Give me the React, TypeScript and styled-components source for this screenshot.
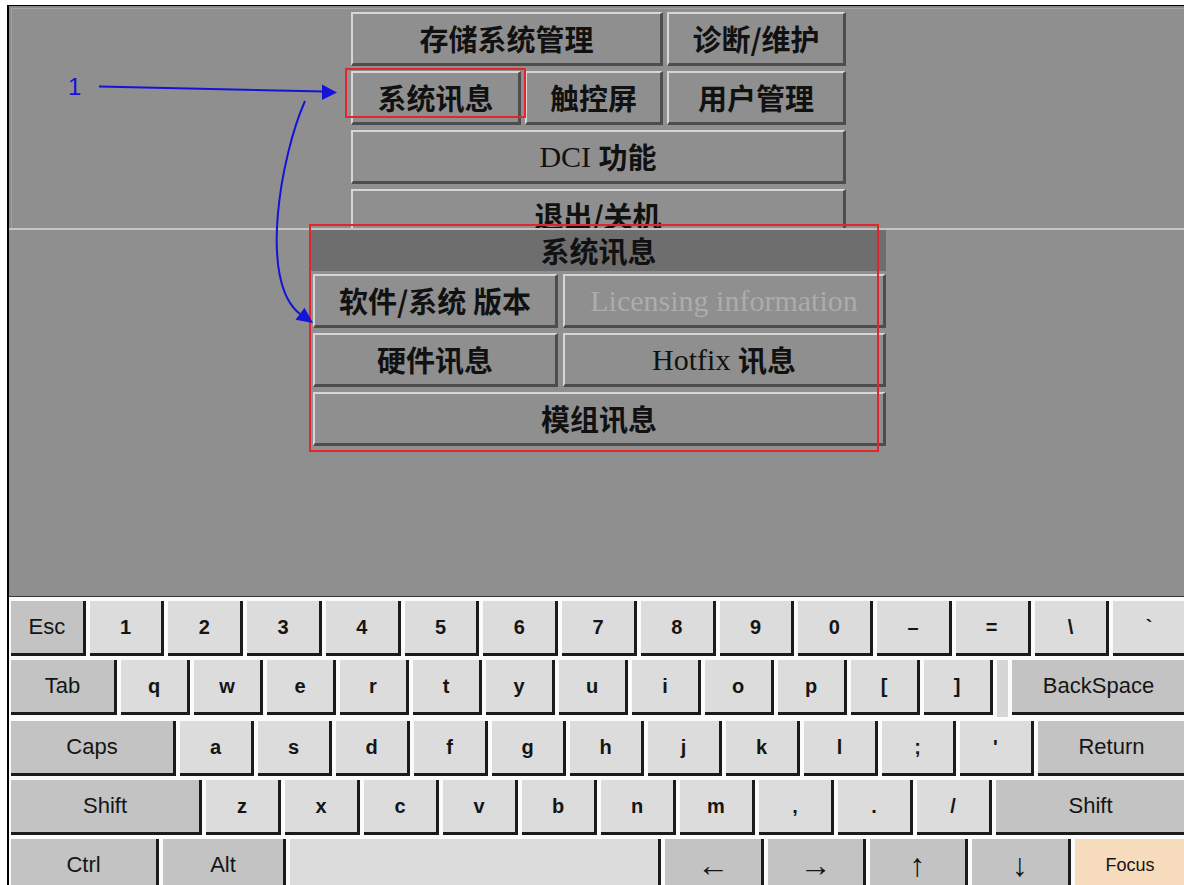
import React from "react";
import styled, { createGlobalStyle } from "styled-components";

const GlobalStyle = createGlobalStyle`
  html, body {
    margin: 0;
    padding: 0;
    background: #ffffff;
    overflow: hidden;
  }
`;

const Page = styled.div`
  position: relative;
  width: 1184px;
  height: 885px;
  overflow: hidden;
  background: #ffffff;
`;

const Frame = styled.div`
  box-sizing: border-box;
  margin: 5px 0 0 7px;
  width: 1181px;
  height: 880px;
  border-top: 1px solid #000000;
  border-left: 2px solid #000000;
  display: flex;
  flex-direction: column;
  overflow: hidden;
`;

const UpperPanel = styled.div`
  flex: 0 0 222px;
  background: #8f8f8f;
  box-shadow: inset 2px 2px 0 #8a8a8a, inset 3px 3px 0 #a3a3a3;
  overflow: hidden;
  padding: 6px 0 0 342px;
  box-sizing: border-box;
`;

const MenuGrid = styled.div`
  display: grid;
  grid-template-columns: 170px 138px 179px;
  grid-auto-rows: 54px;
  column-gap: 4px;
  row-gap: 5px;
`;

const PanelButton = styled.div<{ $span?: number; $disabled?: boolean }>`
  grid-column: span ${(p) => p.$span ?? 1};
  box-sizing: border-box;
  height: 54px;
  background: #8f8f8f;
  border-top: 2px solid #d6d6d6;
  border-left: 2px solid #d6d6d6;
  border-right: 3px solid #4d4d4d;
  border-bottom: 3px solid #4d4d4d;
  display: flex;
  align-items: center;
  justify-content: center;
  font-family: "Noto Sans CJK SC", "Liberation Sans", sans-serif;
  font-weight: 700;
  font-size: 29px;
  line-height: 1;
  white-space: pre;
  color: ${(p) => (p.$disabled ? "#acacac" : "#111111")};
`;

const Latin = styled.span`
  font-family: "Liberation Serif", "Times New Roman", serif;
  font-weight: 400;
  font-size: 30px;
`;

const LowerPanel = styled.div`
  flex: 0 0 369px;
  box-sizing: border-box;
  background: #8f8f8f;
  border-top: 2px solid #c4c4c4;
  border-bottom: 1px solid #383838;
  padding-left: 302px;
`;

const Dialog = styled.div`
  width: 575px;
  display: flex;
  flex-direction: column;
`;

const TitleBar = styled.div`
  height: 41px;
  background: #6e6e6e;
  display: flex;
  align-items: center;
  justify-content: center;
  font-family: "Noto Sans CJK SC", sans-serif;
  font-weight: 700;
  font-size: 29px;
  line-height: 1;
  color: #111111;
`;

const DialogGrid = styled.div`
  display: grid;
  grid-template-columns: 245px 1fr;
  grid-auto-rows: 54px;
  gap: 5px;
  padding: 3px 0 0 2px;
`;

const Keyboard = styled.div`
  flex: 1 1 auto;
  background: #fbfbfb;
  padding: 4px 0 0 2px;
  display: flex;
  flex-direction: column;
  gap: 4px;
`;

const KeyRow = styled.div`
  display: flex;
  gap: 4px;
  width: 1177px;
`;

type Tone = "char" | "mod" | "arrow" | "focus";

const toneBg: Record<Tone, string> = {
  char: "#dcdcdc",
  mod: "#c3c3c3",
  arrow: "#c3c3c3",
  focus: "#f6dbbd",
};

const toneSize: Record<Tone, string> = {
  char: "20px",
  mod: "22px",
  arrow: "32px",
  focus: "18px",
};

const Key = styled.div<{ $tone: Tone; $w?: number }>`
  box-sizing: border-box;
  height: 55px;
  flex: ${(p) => (p.$w ? `0 0 ${p.$w}px` : "1 1 0")};
  min-width: 0;
  background: ${(p) => toneBg[p.$tone]};
  border-right: 3px solid #1b1b1b;
  border-bottom: 3px solid #1b1b1b;
  display: flex;
  align-items: center;
  justify-content: center;
  font-family: "Liberation Sans", "DejaVu Sans", Arial, sans-serif;
  font-size: ${(p) => toneSize[p.$tone]};
  font-weight: ${(p) => (p.$tone === "char" ? 700 : 400)};
  line-height: 1;
  color: #151515;
`;

const KeyGap = styled.div`
  flex: 0 0 11px;
  height: 57px;
  background: #d6d6d6;
`;

const RedBox = styled.div<{ $x: number; $y: number; $w: number; $h: number }>`
  position: absolute;
  box-sizing: border-box;
  left: ${(p) => p.$x}px;
  top: ${(p) => p.$y}px;
  width: ${(p) => p.$w}px;
  height: ${(p) => p.$h}px;
  border: 2px solid #e4252c;
  pointer-events: none;
`;

const StepLabel = styled.div`
  position: absolute;
  left: 68px;
  top: 75px;
  font-family: "Liberation Sans", Arial, sans-serif;
  font-size: 24px;
  line-height: 24px;
  color: #1414d8;
`;

const ArrowLayer = styled.svg`
  position: absolute;
  left: 0;
  top: 0;
  pointer-events: none;
`;

type K = { l: string; t?: Tone; w?: number };

const row1: K[] = [
  { l: "Esc", t: "mod" },
  { l: "1" }, { l: "2" }, { l: "3" }, { l: "4" }, { l: "5" }, { l: "6" },
  { l: "7" }, { l: "8" }, { l: "9" }, { l: "0" }, { l: "–" }, { l: "=" },
  { l: "\\" }, { l: "`" },
];

const row2Letters = ["q", "w", "e", "r", "t", "y", "u", "i", "o", "p", "[", "]"];
const row3Letters = ["a", "s", "d", "f", "g", "h", "j", "k", "l", ";", "'"];
const row4Letters = ["z", "x", "c", "v", "b", "n", "m", ",", ".", "/"];

const row5: K[] = [
  { l: "Ctrl", t: "mod", w: 148 },
  { l: "Alt", t: "mod", w: 123 },
  { l: "", t: "char", w: 371 },
  { l: "←", t: "arrow", w: 99 },
  { l: "→", t: "arrow", w: 98 },
  { l: "↑", t: "arrow", w: 98 },
  { l: "↓", t: "arrow", w: 99 },
  { l: "Focus", t: "focus" },
];

const renderKeys = (keys: K[]) =>
  keys.map((k, i) => (
    <Key key={i} $tone={k.t ?? "char"} $w={k.w}>
      {k.l}
    </Key>
  ));

const BLUE = "#1414d8";

export default function App() {
  return (
    <>
      <GlobalStyle />
      <Page>
        <Frame>
          <UpperPanel>
            <MenuGrid>
              <PanelButton $span={2}>存储系统管理</PanelButton>
              <PanelButton>诊断/维护</PanelButton>
              <PanelButton>系统讯息</PanelButton>
              <PanelButton>触控屏</PanelButton>
              <PanelButton>用户管理</PanelButton>
              <PanelButton $span={3}>
                <Latin>DCI </Latin>功能
              </PanelButton>
              <PanelButton $span={3}>退出/关机</PanelButton>
            </MenuGrid>
          </UpperPanel>
          <LowerPanel>
            <Dialog>
              <TitleBar>系统讯息</TitleBar>
              <DialogGrid>
                <PanelButton>软件/系统 版本</PanelButton>
                <PanelButton $disabled>
                  <Latin>Licensing information</Latin>
                </PanelButton>
                <PanelButton>硬件讯息</PanelButton>
                <PanelButton>
                  <Latin>Hotfix </Latin>讯息
                </PanelButton>
                <PanelButton $span={2}>模组讯息</PanelButton>
              </DialogGrid>
            </Dialog>
          </LowerPanel>
          <Keyboard>
            <KeyRow>{renderKeys(row1)}</KeyRow>
            <KeyRow>
              <Key $tone="mod" $w={106}>Tab</Key>
              {renderKeys(row2Letters.map((l) => ({ l, w: 69 })))}
              <KeyGap />
              <Key $tone="mod">BackSpace</Key>
            </KeyRow>
            <KeyRow>
              <Key $tone="mod" $w={165}>Caps</Key>
              {renderKeys(row3Letters.map((l) => ({ l, w: 74 })))}
              <Key $tone="mod">Return</Key>
            </KeyRow>
            <KeyRow>
              <Key $tone="mod" $w={191}>Shift</Key>
              {renderKeys(row4Letters.map((l) => ({ l, w: 75 })))}
              <Key $tone="mod">Shift</Key>
            </KeyRow>
            <KeyRow>{renderKeys(row5)}</KeyRow>
          </Keyboard>
        </Frame>

        <RedBox $x={345} $y={68} $w={181} $h={50} />
        <RedBox $x={309} $y={224} $w={570} $h={228} />
        <StepLabel>1</StepLabel>
        <ArrowLayer width={1184} height={885} viewBox="0 0 1184 885">
          <line x1={99} y1={86.5} x2={324} y2={91.5} stroke={BLUE} strokeWidth={2} />
          <polygon points="322,84.5 337,92.5 322,100" fill={BLUE} />
          <path
            d="M305,101 C281,155 258,282 300,314"
            fill="none"
            stroke={BLUE}
            strokeWidth={2}
          />
          <polygon points="313,323 295.5,319.8 304.5,307.8" fill={BLUE} />
        </ArrowLayer>
      </Page>
    </>
  );
}
